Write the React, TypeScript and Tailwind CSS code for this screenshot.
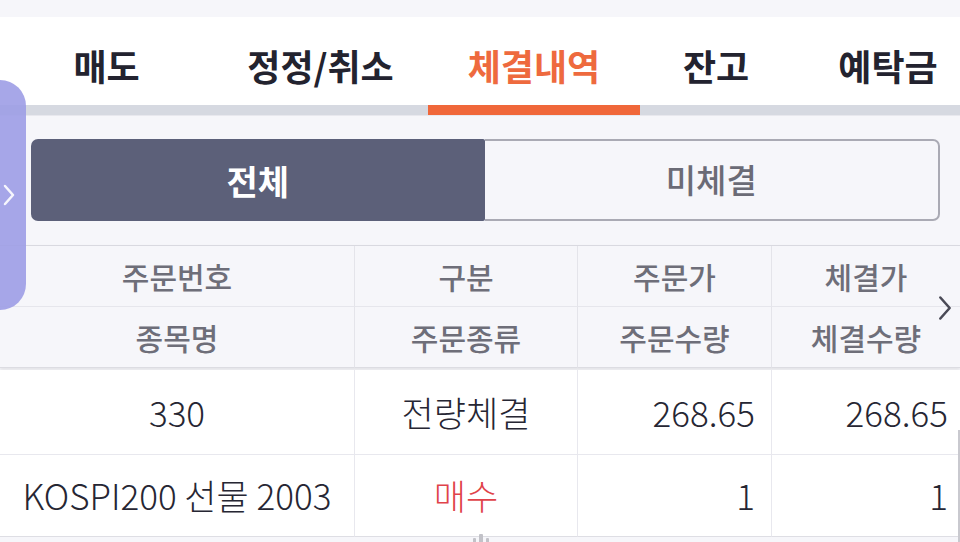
import React from "react";

const tabs = [
  { label: "매도", w: "w-[213px]" },
  { label: "정정/취소", w: "w-[215px]" },
  { label: "체결내역", w: "w-[212px]", active: true },
  { label: "잔고", w: "w-[152px]" },
  { label: "예탁금", w: "w-[192px]" },
];

function Chevron({ className, sw = 2 }: { className?: string; sw?: number }) {
  return (
    <svg viewBox="0 0 12 24" className={className} fill="none" stroke="currentColor" strokeWidth={sw} strokeLinecap="round" strokeLinejoin="round">
      <path d="M2 3 L10 12 L2 21" />
    </svg>
  );
}

export default function App() {
  return (
    <div className="relative w-[960px] h-[542px] overflow-hidden bg-[#f6f6fa] font-['Noto_Sans_CJK_KR',sans-serif]">
      <div className="h-[17px] bg-[#f6f6fa]" />
      {/* top tabs */}
      <div className="flex h-[88px] bg-white">
        {tabs.map((t) => (
          <div
            key={t.label}
            className={`${t.w} shrink-0 flex items-center justify-center pt-2 text-[36px] font-semibold ${
              t.active ? "text-[#ee6a3e]" : "text-[#23232f]"
            }`}
          >
            {t.label}
          </div>
        ))}
      </div>
      <div className="flex h-[10px] bg-[#d6d9e1]">
        <div className="w-[428px]" />
        <div className="w-[212px] bg-[#f0673a]" />
      </div>
      <div className="h-px bg-[#e8e8ee]" />

      {/* segment */}
      <div className="ml-[31px] mr-[20px] mt-[23px] flex h-[82px]">
        <div className="flex-1 flex items-center justify-center rounded-l-[7px] rounded-r-[2px] bg-[#5c6079] text-[34px] font-semibold text-white">
          전체
        </div>
        <div className="flex-1 flex items-center justify-center rounded-r-[7px] border-2 border-l-0 border-[#aaaab4] text-[33px] font-medium text-[#6b6b76]">
          미체결
        </div>
      </div>

      {/* table header */}
      <div className="mt-[24px] border-t border-[#d9d9e0] grid grid-cols-[354px_223px_194px_1fr] text-[30px] font-medium text-[#6e6e79] shadow-[0_2px_3px_rgba(0,0,0,0.08)]">
        {["주문번호", "구분", "주문가", "체결가"].map((h, i) => (
          <div key={h} className={`h-[61px] flex items-center justify-center border-b border-[#e6e6ec] ${i > 0 ? "border-l" : ""} border-l-[#e4e4ea]`}>
            {h}
          </div>
        ))}
        {["종목명", "주문종류", "주문수량", "체결수량"].map((h, i) => (
          <div key={h} className={`h-[61px] flex items-center justify-center border-b border-[#dcdce2] ${i > 0 ? "border-l" : ""} border-l-[#e4e4ea]`}>
            {h}
          </div>
        ))}
      </div>

      {/* data rows */}
      <div className="mt-[2px] bg-white grid grid-cols-[354px_223px_194px_1fr] text-[35px] font-light text-[#262633]">
        <div className="h-[85px] flex items-center justify-center border-b border-[#e8e8ee]">330</div>
        <div className="h-[85px] flex items-center justify-center border-b border-l border-[#e8e8ee]">전량체결</div>
        <div className="h-[85px] flex items-center justify-end pr-[16px] border-b border-l border-[#e8e8ee]">268.65</div>
        <div className="h-[85px] flex items-center justify-end pr-[12px] border-b border-l border-[#e8e8ee]">268.65</div>

        <div className="h-[82px] flex items-center justify-center border-b border-[#dedee4]">KOSPI200 선물 2003</div>
        <div className="h-[82px] flex items-center justify-center border-b border-l border-[#dedee4] border-l-[#e8e8ee] text-[#e0434a]">매수</div>
        <div className="h-[82px] flex items-center justify-end pr-[16px] border-b border-l border-[#dedee4] border-l-[#e8e8ee]">1</div>
        <div className="h-[82px] flex items-center justify-end pr-[12px] border-b border-l border-[#dedee4] border-l-[#e8e8ee]">1</div>
      </div>

      {/* left handle overlay */}
      <div className="absolute left-0 top-[80px] w-[26px] h-[230px] rounded-r-[26px] bg-[#9d9de6]/90 flex items-center justify-start pl-[3px]">
        <Chevron className="w-[12px] h-[26px] text-white/90" sw={2.5} />
      </div>

      {/* right chevron */}
      <Chevron className="absolute left-[938px] top-[292px] w-[14px] h-[32px] text-[#4a4a56]" sw={2.2} />

      {/* right scroll edge */}
      <div className="absolute left-[958px] top-[430px] w-[2px] h-[112px] bg-[#c9c9cf]" />

      {/* faint bottom icon */}
      <svg className="absolute left-[470px] top-[532px] w-[22px] h-[12px] text-[#c2c2c8]" viewBox="0 0 22 12" fill="currentColor">
        <rect x="9" y="2" width="4" height="10" rx="1" />
        <rect x="3" y="6" width="3" height="6" rx="1" />
        <rect x="16" y="6" width="3" height="6" rx="1" />
      </svg>
    </div>
  );
}
